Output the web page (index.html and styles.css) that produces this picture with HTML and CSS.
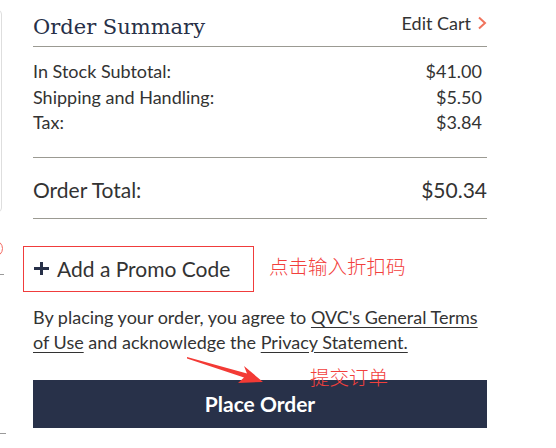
FILE: index.html
```html
<!DOCTYPE html>
<html lang="en">
<head>
<meta charset="utf-8">
<title>Order Summary</title>
<link rel="stylesheet" href="styles.css">
</head>
<body>
<div class="page">
  <div class="edge-panel"></div>
  <div class="edge-circle"></div>
  <div class="edge-tick edge-tick-a"></div>
  <div class="edge-tick edge-tick-b"></div>

  <section class="summary">
    <header class="sum-head">
      <h2 class="sum-title">Order Summary</h2>
      <a class="edit-cart" href="#">Edit Cart
        <svg class="chev" width="10" height="14" viewBox="0 0 10 14"><path d="M2 1.5 L8 7 L2 12.5" fill="none" stroke="#f0735c" stroke-width="2"/></svg>
      </a>
    </header>

    <div class="rows">
      <div class="row"><span>In Stock Subtotal:</span><span>$41.00</span></div>
      <div class="row"><span>Shipping and Handling:</span><span>$5.50</span></div>
      <div class="row"><span>Tax:</span><span>$3.84</span></div>
    </div>

    <div class="total"><span>Order Total:</span><span>$50.34</span></div>

    <div class="promo-row">
      <button class="promo" type="button">
        <svg class="plus" width="15" height="13" viewBox="0 0 15 13"><path d="M0 6.5 H15 M7.5 0 V13" stroke="#273048" stroke-width="3"/></svg>
        <span>Add a Promo Code</span>
      </button>
      <span class="note note-promo">点击输入折扣码</span>
    </div>

    <p class="terms">By placing your order, you agree to <a href="#">QVC's General Terms</a> <a href="#">of Use</a> and acknowledge the <a href="#">Privacy Statement.</a></p>

    <div class="cta">
      <span class="note note-submit">提交订单</span>
      <svg class="arrow" width="80" height="30" viewBox="0 0 80 30"><polygon points="0,0 60,16.5 57,9 76,25 51,26 57,20.5 0,1.6" fill="#f33a35"/></svg>
      <button class="place" type="button">Place Order</button>
    </div>
  </section>
</div>
</body>
</html>
```

FILE: styles.css
```css
* { box-sizing: border-box; }
html, body { margin: 0; padding: 0; background: #fff; }
body { font-family: Lato, "Noto Sans", sans-serif; color: #333; }

.page { position: relative; width: 556px; height: 448px; overflow: hidden; }

.edge-panel {
  position: absolute; left: -30px; top: 10px; width: 32px; height: 202px;
  border: 1px solid #dedede; border-radius: 4px;
}
.edge-circle {
  position: absolute; left: -14px; top: 240px; width: 17px; height: 17px;
  border: 1.5px solid #f36a62; border-radius: 50%;
}
.edge-tick { position: absolute; left: 0; height: 1px; background: #9a9a9a; }
.edge-tick-a { top: 274px; width: 4px; }
.edge-tick-b { top: 433px; width: 6px; }

.summary { margin-left: 33px; width: 454px; }

.sum-head {
  display: flex; justify-content: space-between; align-items: flex-end;
  height: 47px; border-bottom: 1px solid #9b9a92; padding-bottom: 6px;
}
.sum-title {
  margin: 0; font-family: "DejaVu Serif", "Liberation Serif", serif; font-weight: normal;
  font-size: 21px; line-height: 26px; color: #273048;
}
.edit-cart {
  display: flex; align-items: center; gap: 6px; margin-bottom: 6px;
  font-size: 18px; line-height: 22px; color: #333; text-decoration: none;
}
.chev { display: block; }

.rows { padding: 12px 5px 21px 0; border-bottom: 1px solid #9b9a92; }
.row {
  display: flex; justify-content: space-between;
  font-size: 18px; line-height: 25.5px; color: #333;
}

.total {
  display: flex; justify-content: space-between;
  padding: 19px 0 16px; border-bottom: 1px solid #9b9a92;
  font-size: 21px; line-height: 25px; color: #333;
}

.promo-row { display: flex; align-items: flex-start; margin: 27px 0 0 -10px; }
.promo {
  display: flex; align-items: center; gap: 8px;
  width: 231px; height: 46px; padding: 0 0 0 10px;
  border: 1px solid #f03c3c; background: #fff; cursor: pointer;
  font-family: Lato, sans-serif; font-size: 21px; line-height: 25px; color: #333;
}
.plus { display: block; }
.note {
  font-family: "Noto Sans CJK SC", sans-serif; font-weight: 300; color: #f2403c;
}
.note-promo { margin: 8px 0 0 15px; font-size: 19.5px; line-height: 24px; }

.terms {
  margin: 13px 0 0; font-size: 18px; line-height: 25px; color: #333;
}
.terms a { color: #333; text-decoration: underline; text-underline-offset: 3px; }

.cta { position: relative; margin-top: 25px; }
.note-submit {
  position: absolute; left: 277px; top: -15px; font-size: 19.5px; line-height: 24px;
}
.arrow { position: absolute; left: 154px; top: -23px; }
.place {
  display: block; width: 454px; height: 48px; border: 0; background: #283149;
  color: #fff; font-family: Lato, sans-serif; font-weight: bold; font-size: 21px;
  line-height: 25px; padding: 0;
}
```
